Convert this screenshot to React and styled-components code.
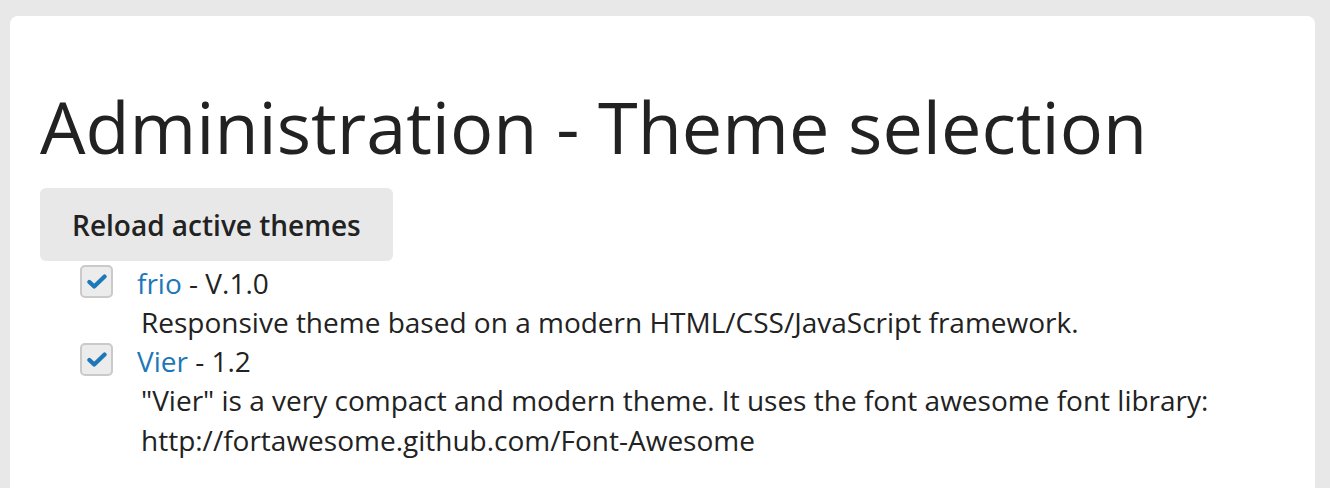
import styled, { createGlobalStyle } from "styled-components";

const GlobalStyle = createGlobalStyle`
    html, body {
        margin: 0;
        padding: 0;
        background: #e8e8e8;
    }
    body {
        font-family: "Open Sans", "Noto Sans", sans-serif;
        color: #222;
    }
`

const themes = [
    {
        name: 'frio',
        version: 'V.1.0',
        description: ['Responsive theme based on a modern HTML/CSS/JavaScript framework.'],
    },
    {
        name: 'Vier',
        version: '1.2',
        description: [
            '"Vier" is a very compact and modern theme. It uses the font awesome font library:',
            'http://fortawesome.github.com/Font-Awesome',
        ],
    },
]

function CheckIcon() {
    return (
        <svg width="20" height="15" viewBox="0 0 20 15">
            <path d="M2.4 8 L7.2 12.6 L17.6 2.6" fill="none" stroke="#1d77b8" strokeWidth="4.2" strokeLinecap="round" strokeLinejoin="round" />
        </svg>
    )
}

export default function App() {
    return (
        <Page>
            <GlobalStyle />
            <Card>
                <Title>Administration - Theme selection</Title>
                <ReloadButton>Reload active themes</ReloadButton>
                <ThemeList>
                    {themes.map(theme => (
                        <ThemeItem key={theme.name}>
                            <Checkbox><CheckIcon /></Checkbox>
                            <div>
                                <ThemeName><a href="#">{theme.name}</a> - {theme.version}</ThemeName>
                                {theme.description.map(line => (
                                    <Description key={line}>{line}</Description>
                                ))}
                            </div>
                        </ThemeItem>
                    ))}
                </ThemeList>
            </Card>
        </Page>
    )
}

const Page = styled.div`
    padding: 16px 15px 0 10px;
    height: 488px;
    box-sizing: border-box;
    overflow: hidden;
`

const Card = styled.section`
    background: #fff;
    border-radius: 8px;
    padding: 60px 30px 40px;
    min-height: 500px;
`

const Title = styled.h1`
    margin: 0 0 12px;
    font-size: 72px;
    font-weight: 400;
    line-height: 100px;
    color: #222;
`

const ReloadButton = styled.button`
    display: block;
    border: none;
    background: #e8e8e8;
    border-radius: 6px;
    padding: 0 32px;
    height: 73px;
    font-family: inherit;
    font-size: 28px;
    font-weight: 600;
    color: #222;
    cursor: pointer;
`

const ThemeList = styled.ul`
    list-style: none;
    margin: 3px 0 0 40px;
    padding: 0;
`

const ThemeItem = styled.li`
    display: grid;
    grid-template-columns: 57px 1fr;
    align-items: start;
`

const Checkbox = styled.span`
    display: flex;
    align-items: center;
    justify-content: center;
    width: 33px;
    height: 33px;
    margin-top: 1px;
    box-sizing: border-box;
    border: 2px solid #cacaca;
    border-radius: 5px;
    background: #ececec;
`

const ThemeName = styled.div`
    font-size: 28px;
    line-height: 38px;
    a {
        color: #1d77b8;
        text-decoration: none;
    }
`

const Description = styled.div`
    font-size: 28px;
    line-height: 40px;
    padding-left: 4px;
`
